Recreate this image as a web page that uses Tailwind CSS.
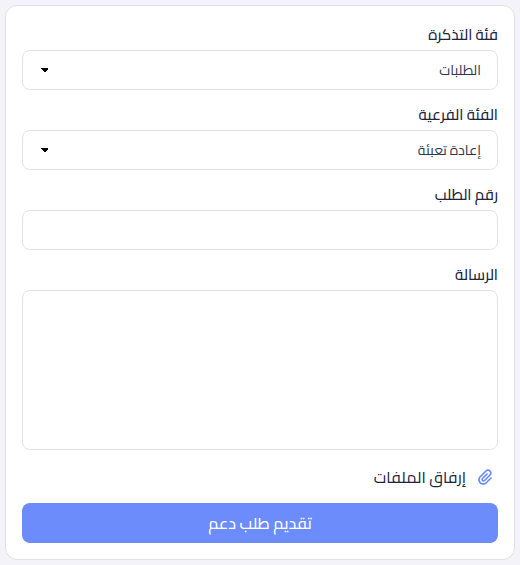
<!DOCTYPE html>
<html lang="ar" dir="rtl">
  <head>
    <meta charset="UTF-8" />
    <meta name="viewport" content="width=device-width, initial-scale=1.0" />
    <title>تقديم طلب دعم</title>
    <script src="https://cdn.jsdelivr.net/npm/@tailwindcss/browser@4"></script>
  </head>
  <body class="bg-[#f4f3f9] p-[5px] font-['Cairo','DejaVu_Sans',sans-serif] text-[#212340]">
    <form class="flex flex-col gap-3 rounded-xl border border-[#e0e0e6] bg-white p-4">
      <div>
        <label for="category" class="mb-[2px] block text-[15px] leading-[26px] font-medium">فئة التذكرة</label>
        <div class="relative">
          <select id="category" class="block h-10 w-full appearance-none rounded-lg border border-[#e2e2e4] bg-white px-4 text-sm text-[#32344f]">
            <option>الطلبات</option>
          </select>
          <svg class="pointer-events-none absolute top-[18px] left-[19px] h-1 w-[7px]" viewBox="0 0 7 4" shape-rendering="crispEdges"><path d="M0 0h7v1L4 4H3L0 1z" /></svg>
        </div>
      </div>
      <div>
        <label for="subcategory" class="mb-[2px] block text-[15px] leading-[26px] font-medium">الفئة الفرعية</label>
        <div class="relative">
          <select id="subcategory" class="block h-10 w-full appearance-none rounded-lg border border-[#e2e2e4] bg-white px-4 text-sm text-[#32344f]">
            <option>إعادة تعبئة</option>
          </select>
          <svg class="pointer-events-none absolute top-[18px] left-[19px] h-1 w-[7px]" viewBox="0 0 7 4" shape-rendering="crispEdges"><path d="M0 0h7v1L4 4H3L0 1z" /></svg>
        </div>
      </div>
      <div>
        <label for="order" class="mb-[2px] block text-[15px] leading-[26px] font-medium">رقم الطلب</label>
        <input id="order" type="text" class="block h-10 w-full rounded-lg border border-[#e2e2e4] px-4 text-sm" />
      </div>
      <div>
        <label for="message" class="mb-[2px] block text-[15px] leading-[26px] font-medium">الرسالة</label>
        <textarea id="message" class="block h-40 w-full resize-none rounded-lg border border-[#e2e2e4] px-4 py-2 text-sm"></textarea>
      </div>
      <button type="button" class="flex h-[29px] items-center gap-3 self-start px-[6px] text-base">
        <svg class="h-4 w-[14px] fill-[#6b8cfa]" viewBox="0 0 448 512"><path d="M364.2 83.8c-24.4-24.4-64-24.4-88.4 0l-184 184c-42.1 42.1-42.1 110.3 0 152.4s110.3 42.1 152.4 0l152-152c10.9-10.9 28.7-10.9 39.6 0s10.9 28.7 0 39.6l-152 152c-64 64-167.6 64-231.6 0s-64-167.6 0-231.6l184-184c46.3-46.3 121.3-46.3 167.6 0s46.3 121.3 0 167.6l-176 176c-28.6 28.6-75 28.6-103.6 0s-28.6-75 0-103.6l144-144c10.9-10.9 28.7-10.9 39.6 0s10.9 28.7 0 39.6l-144 144c-6.7 6.7-6.7 17.7 0 24.4s17.7 6.7 24.4 0l176-176c24.4-24.4 24.4-64 0-88.4z" /></svg>
        إرفاق الملفات
      </button>
      <button type="submit" class="h-10 rounded-lg bg-[#6b8cfa] text-base font-medium text-white">تقديم طلب دعم</button>
    </form>
  </body>
</html>
